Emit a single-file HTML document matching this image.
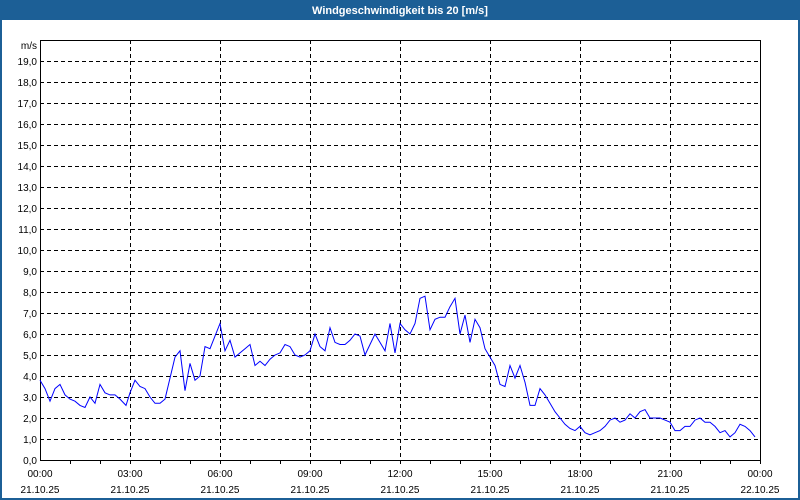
<!DOCTYPE html>
<html><head><meta charset="utf-8"><style>
html,body{margin:0;padding:0;background:#fff;}
body{width:800px;height:500px;overflow:hidden;position:relative;font-family:"Liberation Sans",sans-serif;}
</style></head><body>
<svg width="800" height="500" xmlns="http://www.w3.org/2000/svg" style="position:absolute;left:0;top:0">
<rect x="0" y="0" width="800" height="500" fill="#1c5f96"/>
<rect x="2" y="20" width="796" height="478" fill="#fff"/>
<text x="400" y="14" fill="#fff" font-size="11" font-weight="bold" text-anchor="middle" font-family="Liberation Sans, sans-serif">Windgeschwindigkeit bis 20 [m/s]</text>
<g stroke="#000" stroke-width="1" stroke-dasharray="4,3" shape-rendering="crispEdges">
<line x1="40" x2="760" y1="439.5" y2="439.5"/><line x1="40" x2="760" y1="418.5" y2="418.5"/><line x1="40" x2="760" y1="397.5" y2="397.5"/><line x1="40" x2="760" y1="376.5" y2="376.5"/><line x1="40" x2="760" y1="355.5" y2="355.5"/><line x1="40" x2="760" y1="334.5" y2="334.5"/><line x1="40" x2="760" y1="313.5" y2="313.5"/><line x1="40" x2="760" y1="292.5" y2="292.5"/><line x1="40" x2="760" y1="271.5" y2="271.5"/><line x1="40" x2="760" y1="250.5" y2="250.5"/><line x1="40" x2="760" y1="229.5" y2="229.5"/><line x1="40" x2="760" y1="208.5" y2="208.5"/><line x1="40" x2="760" y1="187.5" y2="187.5"/><line x1="40" x2="760" y1="166.5" y2="166.5"/><line x1="40" x2="760" y1="145.5" y2="145.5"/><line x1="40" x2="760" y1="124.5" y2="124.5"/><line x1="40" x2="760" y1="103.5" y2="103.5"/><line x1="40" x2="760" y1="82.5" y2="82.5"/><line x1="40" x2="760" y1="61.5" y2="61.5"/>
<line x1="130.5" x2="130.5" y1="40" y2="460"/><line x1="220.5" x2="220.5" y1="40" y2="460"/><line x1="310.5" x2="310.5" y1="40" y2="460"/><line x1="400.5" x2="400.5" y1="40" y2="460"/><line x1="490.5" x2="490.5" y1="40" y2="460"/><line x1="580.5" x2="580.5" y1="40" y2="460"/><line x1="670.5" x2="670.5" y1="40" y2="460"/>
</g>
<g stroke="#000" stroke-width="1" fill="none" shape-rendering="crispEdges">
<rect x="40.5" y="40.5" width="720" height="420"/>
<path d="M70.5 460v4M100.5 460v4M130.5 460v4M160.5 460v4M190.5 460v4M220.5 460v4M250.5 460v4M280.5 460v4M310.5 460v4M340.5 460v4M370.5 460v4M400.5 460v4M430.5 460v4M460.5 460v4M490.5 460v4M520.5 460v4M550.5 460v4M580.5 460v4M610.5 460v4M640.5 460v4M670.5 460v4M700.5 460v4M730.5 460v4M760.5 460v4"/>
</g>
<g transform="translate(0,460) scale(1,-21)">
<polyline fill="none" stroke="#0000ff" stroke-width="1" vector-effect="non-scaling-stroke" points="40,3.8 45,3.4 50,2.8 55,3.4 60,3.6 65,3.1 70,2.9 75,2.8 80,2.6 85,2.5 90,3.0 95,2.7 100,3.6 105,3.2 110,3.1 115,3.1 120,2.9 126,2.6 130,3.2 135,3.8 140,3.5 145,3.4 150,3.0 155,2.7 160,2.7 165,2.9 170,3.9 175,4.9 180,5.2 185,3.3 190,4.6 195,3.8 200,4.0 205,5.4 210,5.3 215,5.9 220,6.5 225,5.2 230,5.7 235,4.9 240,5.1 245,5.3 250,5.5 255,4.5 260,4.7 265,4.5 270,4.8 275,5.0 280,5.1 285,5.5 290,5.4 295,5.0 300,4.9 305,5.0 310,5.2 315,6.0 320,5.4 325,5.2 330,6.3 335,5.6 340,5.5 345,5.5 350,5.7 355,6.0 360,5.9 365,5.0 370,5.5 375,6.0 380,5.6 385,5.2 390,6.5 395,5.1 400,6.5 405,6.2 410,6.0 415,6.5 420,7.7 425,7.8 430,6.2 435,6.7 440,6.8 445,6.8 450,7.3 455,7.7 460,6.0 465,6.9 470,5.6 475,6.7 480,6.3 485,5.3 490,4.9 495,4.5 500,3.6 505,3.5 510,4.5 515,3.9 520,4.5 525,3.7 530,2.6 535,2.6 540,3.4 545,3.1 550,2.7 555,2.3 560,2.0 565,1.7 570,1.5 575,1.4 580,1.6 585,1.3 590,1.2 595,1.3 600,1.4 605,1.6 610,1.9 615,2.0 620,1.8 625,1.9 630,2.2 635,2.0 640,2.3 645,2.4 650,2.0 655,2.0 660,2.0 665,1.9 670,1.8 675,1.4 680,1.4 685,1.6 690,1.6 695,1.9 700,2.0 705,1.8 710,1.8 715,1.6 720,1.3 725,1.4 730,1.1 735,1.3 740,1.7 745,1.6 750,1.4 755,1.1"/>
</g>
<g font-size="10" fill="#000" text-anchor="end" font-family="Liberation Sans, sans-serif">
<text x="37" y="49">m/s</text>
<text x="37" y="65">19,0</text><text x="37" y="86">18,0</text><text x="37" y="107">17,0</text><text x="37" y="128">16,0</text><text x="37" y="149">15,0</text><text x="37" y="170">14,0</text><text x="37" y="191">13,0</text><text x="37" y="212">12,0</text><text x="37" y="233">11,0</text><text x="37" y="254">10,0</text><text x="37" y="275">9,0</text><text x="37" y="296">8,0</text><text x="37" y="317">7,0</text><text x="37" y="338">6,0</text><text x="37" y="359">5,0</text><text x="37" y="380">4,0</text><text x="37" y="401">3,0</text><text x="37" y="422">2,0</text><text x="37" y="443">1,0</text><text x="37" y="464">0,0</text>
</g>
<g font-size="10" fill="#000" text-anchor="middle" font-family="Liberation Sans, sans-serif">
<text x="40" y="477">00:00</text><text x="130" y="477">03:00</text><text x="220" y="477">06:00</text><text x="310" y="477">09:00</text><text x="400" y="477">12:00</text><text x="490" y="477">15:00</text><text x="580" y="477">18:00</text><text x="670" y="477">21:00</text><text x="760" y="477">00:00</text>
<text x="40" y="493">21.10.25</text><text x="130" y="493">21.10.25</text><text x="220" y="493">21.10.25</text><text x="310" y="493">21.10.25</text><text x="400" y="493">21.10.25</text><text x="490" y="493">21.10.25</text><text x="580" y="493">21.10.25</text><text x="670" y="493">21.10.25</text><text x="760" y="493">22.10.25</text>
</g>
</svg>
</body></html>
